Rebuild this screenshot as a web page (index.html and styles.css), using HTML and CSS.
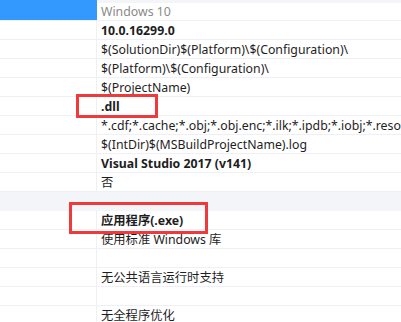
FILE: index.html
```html
<!DOCTYPE html>
<html>
<head>
<title>properties</title>
<link rel="stylesheet" href="styles.css">
</head>
<body>
<div class="grid">
  <div class="row first">
    <div class="name selected"></div>
    <div class="value muted">Windows 10</div>
  </div>
  <div class="row"><div class="name"></div><div class="value bold">10.0.16299.0</div></div>
  <div class="row"><div class="name"></div><div class="value">$(SolutionDir)$(Platform)\$(Configuration)\</div></div>
  <div class="row"><div class="name"></div><div class="value">$(Platform)\$(Configuration)\</div></div>
  <div class="row"><div class="name"></div><div class="value">$(ProjectName)</div></div>
  <div class="row"><div class="name"></div><div class="value bold">.dll</div></div>
  <div class="row"><div class="name"></div><div class="value">*.cdf;*.cache;*.obj;*.obj.enc;*.ilk;*.ipdb;*.iobj;*.resources</div></div>
  <div class="row"><div class="name"></div><div class="value">$(IntDir)$(MSBuildProjectName).log</div></div>
  <div class="row"><div class="name"></div><div class="value bold">Visual Studio 2017 (v141)</div></div>
  <div class="row"><div class="name"></div><div class="value">否</div></div>
  <div class="band"></div>
  <div class="row"><div class="name"></div><div class="value bold">应用程序(.exe)</div></div>
  <div class="row"><div class="name"></div><div class="value">使用标准 Windows 库</div></div>
  <div class="row"><div class="name"></div><div class="value"></div></div>
  <div class="row"><div class="name"></div><div class="value">无公共语言运行时支持</div></div>
  <div class="row"><div class="name"></div><div class="value"></div></div>
  <div class="row"><div class="name"></div><div class="value">无全程序优化</div></div>
</div>

<!-- red annotation boxes -->
<div class="mark mark-dll"></div>
<div class="mark mark-exe"></div>
</body>
</html>
```
FILE: styles.css
```css
html, body {
  margin: 0;
  height: 100%;
  overflow: hidden;
  background-color: #fff;
}

body {
  position: relative;
  font-family: "Noto Sans", "Noto Sans CJK SC", sans-serif;
  font-size: 12.3px;
  color: #1e1e1e;
}

.row {
  display: grid;
  grid-template-columns: 97px 1fr;
  height: 19px;
  box-sizing: border-box;
  border-bottom: 1px solid #eef0f5;
}

.row.first {
  height: 21px;
}

.name {
  border-right: 1px solid #eef0f5;
}

.name.selected {
  background-color: #3399ff;
  border-right-color: #3399ff;
}

.value {
  padding: 2px 0 0 4px;
  line-height: 16px;
  white-space: nowrap;
  overflow: hidden;
}

.first .value {
  border-top: 3px solid #f3f5f9;
  padding-top: 1px;
}

.muted {
  color: #8a8a8a;
}

.bold {
  font-weight: bold;
}

.band {
  height: 19px;
  background-color: #f3f5f9;
}

.mark {
  position: absolute;
  border: 3px solid #ee3a3a;
  box-sizing: border-box;
}

.mark-dll {
  left: 76px;
  top: 94px;
  width: 82px;
  height: 24px;
}

.mark-exe {
  left: 69px;
  top: 202px;
  width: 139px;
  height: 32px;
}
```
